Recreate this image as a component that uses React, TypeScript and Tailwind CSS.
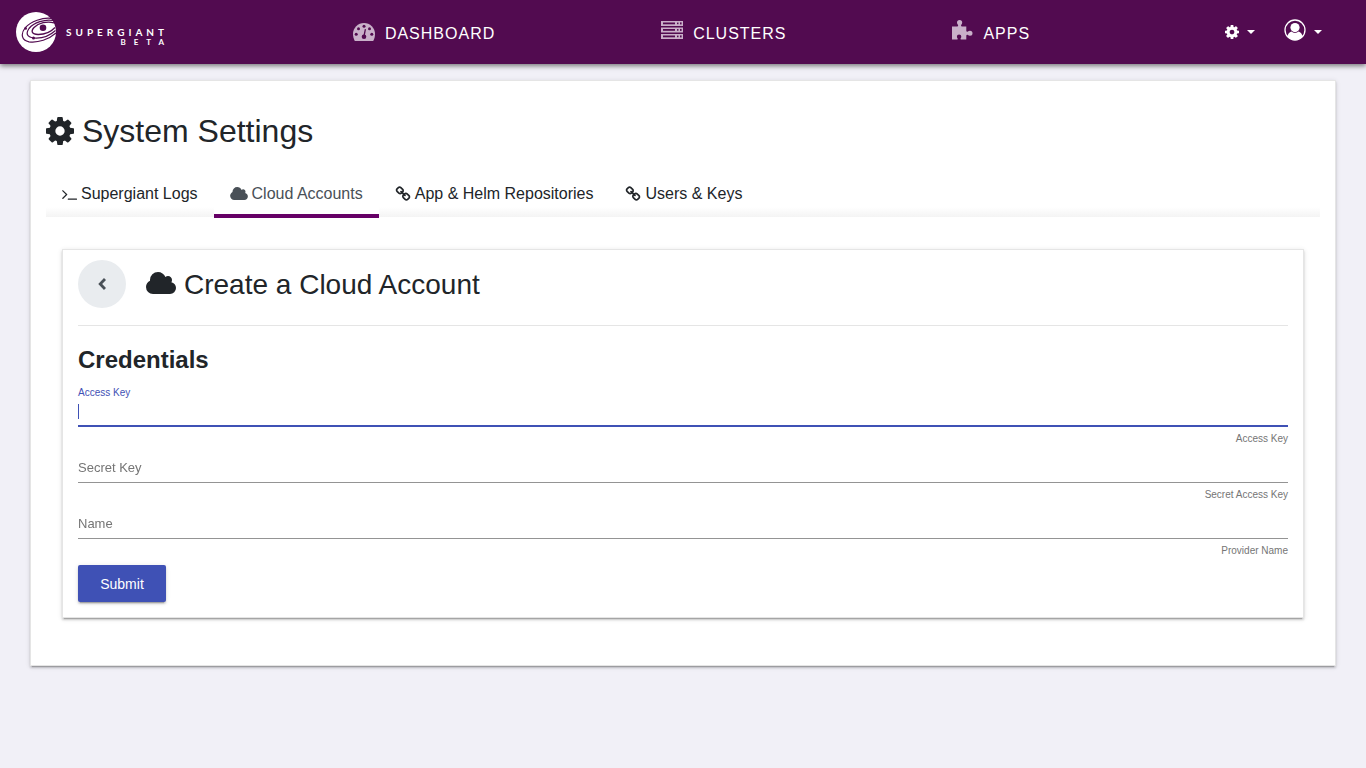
import type { ReactNode } from "react";

const paths = {
  cog: "M1152 896q0-106-75-181t-181-75-181 75-75 181 75 181 181 75 181-75 75-181zm512-109v222q0 12-8 23t-20 13l-185 28q-19 54-39 91 35 50 107 138 10 12 10 25t-9 23q-27 37-99 108t-94 71q-12 0-26-9l-138-108q-44 23-91 38-16 136-29 186-7 28-36 28h-222q-14 0-24.5-8.5t-11.5-21.5l-28-184q-49-16-90-37l-141 107q-10 9-25 9-14 0-25-11-126-114-165-168-7-10-7-23 0-12 8-23 15-21 51-66.5t54-70.5q-27-50-41-99l-183-27q-13-2-21-12.5t-8-23.5v-222q0-12 8-23t19-13l186-28q14-46 39-92-40-57-107-138-10-12-10-24 0-10 9-23 26-36 98.5-107.5t94.5-71.5q13 0 26 10l138 107q44-23 91-38 16-136 29-186 7-28 36-28h222q14 0 24.5 8.5t11.5 21.5l28 184q49 16 90 37l142-107q9-9 24-9 13 0 25 10 129 119 165 170 7 8 7 22 0 12-8 23-15 21-51 66.5t-54 70.5q26 50 41 98l183 28q13 2 21 12.5t8 23.5z",
  cloud: "M1984 1152q0 159-112.5 271.5t-271.5 112.5h-1088q-185 0-316.5-131.5t-131.5-316.5q0-132 71-241.5t187-163.5q-2-28-2-43 0-212 150-362t362-150q158 0 286.5 88t187.5 230q70-62 166-62 106 0 181 75t75 181q0 75-41 138 129 30 213 134.5t84 239.5z",
  terminal: "M649 983l-466 466q-10 10-23 10t-23-10l-50-50q-10-10-10-23t10-23l393-393-393-393q-10-10-10-23t10-23l50-50q10-10 23-10t23 10l466 466q10 10 10 23t-10 23zm1079 457v64q0 14-9 23t-23 9h-960q-14 0-23-9t-9-23v-64q0-14 9-23t23-9h960q14 0 23 9t9 23z",
  link: "M1520 1216q0-40-28-68l-208-208q-28-28-68-28-42 0-72 32 3 3 19 18.5t21.5 21.5 15 19 13 25.5 3.5 27.5q0 40-28 68t-68 28q-15 0-27.5-3.5t-25.5-13-19-15-21.5-21.5-18.5-19q-33 31-33 73 0 40 28 68l206 207q27 27 68 27 40 0 68-26l147-146q28-28 28-67zm-703-705q0-40-28-68l-206-207q-28-28-68-28-39 0-68 27l-147 146q-28 28-28 67 0 40 28 68l208 208q27 27 68 27 42 0 72-31-3-3-19-18.5t-21.5-21.5-15-19-13-25.5-3.5-27.5q0-40 28-68t68-28q15 0 27.5 3.5t25.5 13 19 15 21.5 21.5 18.5 19q33-31 33-73zm895 705q0 120-85 203l-147 146q-83 83-203 83-121 0-204-85l-206-207q-83-83-83-203 0-123 88-209l-88-88q-86 88-208 88-120 0-204-84l-208-208q-84-84-84-204t85-203l147-146q83-83 203-83 121 0 204 85l206 207q83 83 83 203 0 123-88 209l88 88q86-88 208-88 120 0 204 84l208 208q84 84 84 204z",
};

function Glyph({ d, box, className }: { d: string; box: string; className: string }) {
  return (
    <svg viewBox={box} className={className} fill="currentColor" aria-hidden="true">
      <path d={d} />
    </svg>
  );
}

function Logo() {
  return (
    <a href="#home" className="flex w-[187px] shrink-0 items-center gap-2.5 pl-4 text-white">
      <svg viewBox="0 0 40 40" className="size-10 shrink-0" aria-hidden="true">
        <circle cx="20" cy="20" r="20" fill="#fff" />
        <g fill="none" stroke="#520b50">
          <path d="M35.500 6.300C27 5 14.500 9.500 9 16C4.500 22 5.500 28.500 13 29.800C22 31 33 27.500 40 21" strokeWidth="1.200" />
          <path d="M37 8.500C29 7 18 10.500 13 16.500C9.500 21.500 11 25.200 17.500 26C26 26.800 34 23.500 39.500 18.500" strokeWidth="1.200" />
          <path d="M38 10.800C31 8.800 22.500 11 18 15.500C14.500 19.500 16 22.300 22 22.500C29 22.600 35 19.800 39 15.500" strokeWidth="1.300" />
        </g>
        <g fill="#520b50">
          <circle cx="27" cy="15.800" r="3.300" />
          <circle cx="9.700" cy="16.500" r="1.300" />
          <circle cx="17.500" cy="26" r="1.500" />
        </g>
      </svg>
      <span className="flex flex-col items-end pt-2 font-['Lato',sans-serif] font-bold">
        <span className="text-[10px] leading-3 tracking-[4px]">SUPERGIANT</span>
        <span className="-mr-1 text-[8px] leading-2 tracking-[8px]">BETA</span>
      </span>
    </a>
  );
}

function DashboardIcon() {
  return (
    <svg viewBox="0 0 22 18" className="mb-1 h-[18px] w-[22px]" aria-hidden="true">
      <path fill="#c9b0c9" d="M11 0A11 11 0 0 0 0 11c0 2.500.7 4.800 1.500 6.400.3.500.6.600 1 .6h17c.4 0 .7-.1 1-.6.900-1.600 1.500-3.900 1.500-6.400A11 11 0 0 0 11 0z" />
      <g fill="#520b50">
        <circle cx="3.200" cy="11.300" r="1.500" />
        <circle cx="5.500" cy="5.700" r="1.500" />
        <circle cx="11" cy="3.300" r="1.500" />
        <circle cx="16.500" cy="5.700" r="1.500" />
        <circle cx="18.800" cy="11.300" r="1.500" />
        <circle cx="11" cy="13.700" r="2.300" />
        <path d="M10.300 13l1.500-7 1.200.3-1.300 7z" />
      </g>
    </svg>
  );
}

function ClustersIcon() {
  return (
    <svg viewBox="0 0 22 18" className="mb-2 h-[18px] w-[22px]" aria-hidden="true">
      {[0, 6.5, 13].map((y) => (
        <g key={y}>
          <rect y={y} width="22" height="5" fill="#c9b0c9" />
          <rect x="2" y={y + 1.5} width="12" height="1.800" fill="#520b50" />
          <rect x="16" y={y + 1.6} width="1.500" height="1.600" fill="#520b50" />
          <rect x="19" y={y + 1.4} width="1.600" height="2" fill="#520b50" />
        </g>
      ))}
    </svg>
  );
}

function AppsIcon() {
  return (
    <svg viewBox="0 0 21 20" className="mb-2 h-5 w-[21px]" aria-hidden="true">
      <path
        fill="#c9b0c9"
        d="M0 6.500h5.200c1 0 1.200-.8.700-1.700C5.300 4.200 5 3.500 5 2.600a2.600 2.600 0 0 1 5.200 0c0 .9-.3 1.600-.9 2.200-.5.900-.3 1.700.7 1.700h4.300v4.300c0 1 .8 1.200 1.600.8.600-.5 1.200-.8 2.100-.8a2.500 2.500 0 0 1 0 5c-.9 0-1.500-.3-2.100-.8-.8-.4-1.600-.2-1.600.8v3.800H9.500c-1 0-1.200-.6-.8-1.300.4-.5.600-1 .6-1.700a2.200 2.200 0 0 0-4.400 0c0 .7.200 1.200.6 1.700.4.700.2 1.300-.8 1.300H0z"
      />
    </svg>
  );
}

function UserIcon() {
  return (
    <svg viewBox="0 0 22 22" className="mb-1 size-[22px]" aria-hidden="true">
      <circle cx="11" cy="11" r="10" fill="none" stroke="#fff" strokeWidth="1.300" />
      <circle cx="11" cy="8.600" r="4.600" fill="#fff" />
      <path fill="#fff" d="M3.500 17.500c.3-2.500 1.800-4.400 4-5 1 .9 2.100 1.400 3.500 1.400s2.500-.5 3.500-1.400c2.200.6 3.700 2.500 4 5A10 10 0 0 1 11 21a10 10 0 0 1-7.500-3.500z" />
    </svg>
  );
}

function Caret() {
  return (
    <svg viewBox="0 0 8 4" className="h-1 w-2" fill="#fff" aria-hidden="true">
      <path d="M0 0h8L4 4z" />
    </svg>
  );
}

function NavItem({ icon, children }: { icon: ReactNode; children: string }) {
  return (
    <a href={"#" + children.toLowerCase()} className="flex items-center gap-2.5 pt-1 text-base tracking-[1px] text-white">
      {icon}
      {children}
    </a>
  );
}

function Tab({ icon, active, children }: { icon: ReactNode; active?: boolean; children: string }) {
  return (
    <a
      href="#settings"
      aria-current={active ? "page" : undefined}
      className={
        "-mb-px flex h-12 items-center gap-1 border-b-4 px-4 pt-1 text-base " +
        (active ? "border-[#660066] bg-white text-[#495057]" : "border-transparent text-[#212529]")
      }
    >
      {icon}
      {children}
    </a>
  );
}

function Field({ id, label, hint, focused }: { id: string; label: string; hint: string; focused?: boolean }) {
  return (
    <div className="flex h-14 flex-col justify-end">
      <div className={"relative flex flex-col " + (focused ? "border-b-2 border-[#3f51b5]" : "border-b border-[#949494]")}>
        <label
          htmlFor={id}
          className={focused ? "text-[10px] leading-3 text-[#3f51b5]" : "absolute top-0 left-0 text-[13px] leading-4 text-[#757575]"}
        >
          {label}
        </label>
        <input
          id={id}
          autoFocus={focused}
          className={"h-[22px] w-full bg-transparent text-[13px] text-[#212529] caret-transparent outline-none " + (focused ? "mt-1" : "")}
        />
        {focused && <span className="absolute bottom-1.5 left-0 h-[15px] w-px bg-[#3f51b5]" />}
      </div>
      <p className="pt-1.5 text-right text-[10px] leading-3 text-[#757575]">{hint}</p>
    </div>
  );
}

const cardStyle =
  "border border-[#e5e5e5] bg-white px-[15px] shadow-[0_3px_1px_-2px_rgba(0,0,0,0.2),0_2px_2px_0_rgba(0,0,0,0.14),0_1px_5px_0_rgba(0,0,0,0.12)] ";

export default function App() {
  return (
    <div className="min-h-screen bg-[#f1f0f7] font-['Liberation_Sans',sans-serif] text-[#212529]">
      <header className="relative flex h-16 items-center bg-[#520b50] shadow-[0_2px_5px_rgba(0,0,0,0.5)]">
        <Logo />
        <nav className="flex flex-1 items-center justify-evenly">
          <NavItem icon={<DashboardIcon />}>DASHBOARD</NavItem>
          <NavItem icon={<ClustersIcon />}>CLUSTERS</NavItem>
          <NavItem icon={<AppsIcon />}>APPS</NavItem>
        </nav>
        <div className="flex w-[170px] shrink-0 items-center justify-end gap-[29px] pr-11">
          <button type="button" aria-label="Settings" className="flex items-center gap-2">
            <Glyph d={paths.cog} box="128 128 1536 1536" className="size-3.5 text-white" />
            <Caret />
          </button>
          <button type="button" aria-label="Account" className="flex items-center gap-2">
            <UserIcon />
            <Caret />
          </button>
        </div>
      </header>

      <main className="px-[30px] pt-4">
        <div className={"pt-[30px] pb-[47px] " + cardStyle}>
          <h1 className="flex items-center gap-2 text-[32px] leading-10">
            <Glyph d={paths.cog} box="128 128 1536 1536" className="size-7" />
            System Settings
          </h1>

          <nav className="mt-[19px] flex bg-[linear-gradient(to_top,#f4f4f4,#ffffff_10px)]">
            <Tab icon={<Glyph d={paths.terminal} box="64 128 1664 1536" className="h-3.5 w-[15px]" />}>Supergiant Logs</Tab>
            <Tab active icon={<Glyph d={paths.cloud} box="64 128 1920 1408" className="mb-0.5 h-[13px] w-[18px]" />}>
              Cloud Accounts
            </Tab>
            <Tab icon={<Glyph d={paths.link} box="0 0 1792 1664" className="mb-0.5 h-[15px] w-4" />}>App &amp; Helm Repositories</Tab>
            <Tab icon={<Glyph d={paths.link} box="0 0 1792 1664" className="mb-0.5 h-[15px] w-4" />}>Users &amp; Keys</Tab>
          </nav>

          <section className={"mx-4 mt-8 pt-2.5 pb-[15px] " + cardStyle}>
            <div className="flex items-center border-b border-[#e5e5e5] pb-[17px]">
              <button type="button" aria-label="Back" className="flex size-12 items-center justify-center rounded-full bg-[#e9ecef]">
                <svg viewBox="0 0 8 12" className="h-3 w-2" fill="none" stroke="#495057" strokeWidth="2.800" aria-hidden="true">
                  <path d="M7 1L2.200 6l4.800 5" />
                </svg>
              </button>
              <h2 className="ml-5 flex items-center gap-2 pt-0.5 text-[28px] leading-8">
                <Glyph d={paths.cloud} box="64 128 1920 1408" className="mb-1 h-[22px] w-[30px]" />
                Create a Cloud Account
              </h2>
            </div>

            <form onSubmit={(e) => e.preventDefault()}>
              <h3 className="pt-5 text-2xl leading-7 font-bold">Credentials</h3>
              <div className="mt-[15px]">
                <Field id="access-key" label="Access Key" hint="Access Key" focused />
                <Field id="secret-key" label="Secret Key" hint="Secret Access Key" />
                <Field id="name" label="Name" hint="Provider Name" />
              </div>
              <button
                type="submit"
                className="mt-2 h-[37px] w-[88px] rounded-[2px] bg-[#3f51b5] text-sm text-white shadow-[0_3px_1px_-2px_rgba(0,0,0,0.2),0_2px_2px_0_rgba(0,0,0,0.14),0_1px_5px_0_rgba(0,0,0,0.12)]"
              >
                Submit
              </button>
            </form>
          </section>
        </div>
      </main>
    </div>
  );
}
